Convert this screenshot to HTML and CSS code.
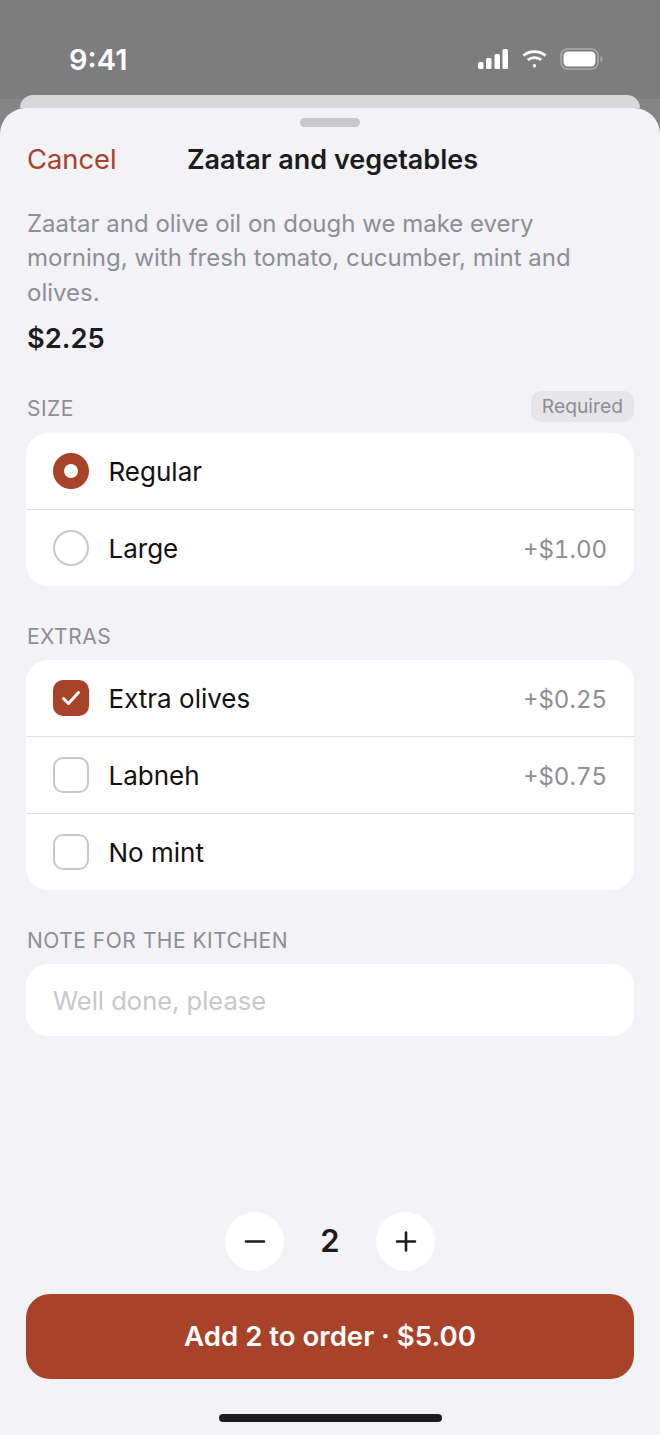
FILE: index.html
```html
<!doctype html>
<html lang="en">
	<head>
		<meta charset="utf-8">
		<title>Zaatar and vegetables</title>
		<meta name="viewport" content="width=device-width, initial-scale=1">
		<link rel="stylesheet" href="styles.css">
	</head>
	<body>
		<div class="status-bar">
			<span class="clock">9:41</span>
			<div class="status-icons">
				<svg width="30" height="20" viewBox="0 0 30 20" fill="#fff">
					<rect x="0" y="13" width="5.5" height="7" rx="1.5"/>
					<rect x="8" y="9" width="5.5" height="11" rx="1.5"/>
					<rect x="16.5" y="5" width="5.5" height="15" rx="1.5"/>
					<rect x="24.5" y="0" width="5.5" height="20" rx="1.5"/>
				</svg>
				<svg width="25" height="20" viewBox="0 0 26 20" fill="none" stroke="#fff" stroke-width="3">
					<path d="M1.5 6.5C8 1 18 1 24.5 6.5"/>
					<path d="M6 11C10 7.8 16 7.8 20 11"/>
					<circle cx="13" cy="17" r="1.8" fill="#fff" stroke="none"/>
				</svg>
				<svg width="43" height="22" viewBox="0 0 43 22" fill="none">
					<rect x="1" y="1" width="37" height="20" rx="6.5" stroke="#aaa" stroke-width="1.6"/>
					<rect x="3.5" y="3.5" width="32" height="15" rx="4.5" fill="#fff"/>
					<path d="M40.5 8C42 8.5 42.5 9.5 42.5 11S42 13.5 40.5 14Z" fill="#aaa"/>
				</svg>
			</div>
		</div>
		<div class="back-card"></div>
		<main class="sheet">
			<div class="grabber"></div>
			<header class="nav">
				<span class="cancel">Cancel</span>
				<h1>Zaatar and vegetables</h1>
			</header>
			<p class="desc">Zaatar and olive oil on dough we make every morning, with fresh tomato, cucumber, mint and olives.</p>
			<div class="price">$2.25</div>

			<div class="section-head">
				<span class="label">Size</span>
				<span class="pill">Required</span>
			</div>
			<div class="group">
				<div class="row">
					<span class="radio on"></span>
					<span class="name">Regular</span>
				</div>
				<div class="row">
					<span class="radio"></span>
					<span class="name">Large</span>
					<span class="extra">+$1.00</span>
				</div>
			</div>

			<div class="section-head extras-head">
				<span class="label">Extras</span>
			</div>
			<div class="group">
				<div class="row">
					<span class="check on">
						<svg width="20" height="16" viewBox="0 0 20 16" fill="none" stroke="#fff" stroke-width="3" stroke-linecap="round" stroke-linejoin="round"><path d="M2.5 8.5L7.5 13.5L17.5 2.5"/></svg>
					</span>
					<span class="name">Extra olives</span>
					<span class="extra">+$0.25</span>
				</div>
				<div class="row">
					<span class="check"></span>
					<span class="name">Labneh</span>
					<span class="extra">+$0.75</span>
				</div>
				<div class="row">
					<span class="check"></span>
					<span class="name">No mint</span>
				</div>
			</div>

			<div class="section-head note-head">
				<span class="label">Note for the kitchen</span>
			</div>
			<div class="note">Well done, please</div>

			<div class="stepper">
				<span class="step-btn">
					<svg width="22" height="22" viewBox="0 0 22 22" stroke="#1c1c1e" stroke-width="2.6" stroke-linecap="round"><path d="M2 10.5H20"/></svg>
				</span>
				<span class="qty">2</span>
				<span class="step-btn">
					<svg width="22" height="22" viewBox="0 0 22 22" stroke="#1c1c1e" stroke-width="2.6" stroke-linecap="round"><path d="M2 10.5H20M11 1.5V19.5"/></svg>
				</span>
			</div>
			<button class="add">Add 2 to order · $5.00</button>
			<div class="home-bar"></div>
		</main>
	</body>
</html>
```

FILE: styles.css
```css
html, body {
	margin: 0;
	height: 100%;
}

body {
	width: 660px;
	height: 1435px;
	overflow: hidden;
	display: flex;
	flex-direction: column;
	background: linear-gradient(#7d7d7d 99px, #858585 99px);
	font-family: Inter, "Liberation Sans", sans-serif;
	color: #1c1c1e;
}

.status-bar {
	height: 95px;
	flex: none;
	box-sizing: border-box;
	padding: 40px 57px 0 69px;
	display: flex;
	justify-content: space-between;
	align-items: flex-start;
}

.clock {
	color: #fff;
	font-size: 29px;
	line-height: 38px;
	font-weight: 600;
	margin-top: 1px;
}

.status-icons {
	display: flex;
	align-items: center;
	gap: 13.5px;
	height: 38px;
}

.back-card {
	flex: none;
	height: 13px;
	margin: 0 20px;
	background: #d8d8d8;
	border-radius: 24px 24px 0 0;
}

.sheet {
	flex: 1;
	display: flex;
	flex-direction: column;
	box-sizing: border-box;
	padding: 10px 26px 0;
	background: #f2f2f7;
	border-radius: 26px 26px 0 0;
}

.grabber {
	width: 60px;
	height: 9px;
	border-radius: 5px;
	background: #c7c7cc;
	align-self: center;
}

.nav {
	display: grid;
	grid-template-columns: 160px auto;
	align-items: center;
	height: 38px;
	margin-top: 13px;
	padding-left: 1px;
}

.cancel {
	color: #a8432a;
	font-size: 27.3px;
}

h1 {
	margin: 0;
	font-size: 27px;
	font-weight: 600;
}

.desc {
	margin: 28.5px 0 0 1px;
	font-size: 24px;
	line-height: 34.5px;
	color: #8e8e93;
}

.price {
	margin: 8.5px 0 0 1px;
	font-size: 27.3px;
	line-height: 40px;
	font-weight: 600;
}

.section-head {
	display: flex;
	justify-content: space-between;
	align-items: center;
	height: 32px;
	margin-top: 32px;
	margin-bottom: 10px;
	padding-left: 1px;
}

.extras-head {
	margin-top: 33px;
	margin-bottom: 9px;
}

.note-head {
	margin-top: 33px;
	margin-bottom: 9px;
}

.label {
	font-size: 21px;
	letter-spacing: 0.5px;
	color: #8e8e93;
	text-transform: uppercase;
	margin-top: 3px;
}

.pill {
	font-size: 19.3px;
	color: #8e8e93;
	background: #e5e5ea;
	border-radius: 10px;
	padding: 0 11px;
	line-height: 31px;
}

.group {
	background: #fff;
	border-radius: 22px;
	overflow: hidden;
}

.row {
	height: 76px;
	display: flex;
	align-items: center;
	padding: 0 27px 0 26.5px;
	gap: 20px;
	border-top: 1px solid #e0e0e5;
}

.row:first-child {
	border-top: 0;
}

.name {
	flex: 1;
	font-size: 26px;
	color: #111;
	margin-top: 2px;
}

.extra {
	font-size: 24px;
	color: #8e8e93;
	font-variant-numeric: tabular-nums;
	margin-top: 4px;
}

.radio, .check {
	flex: none;
	box-sizing: border-box;
	width: 36px;
	height: 36px;
	border: 2px solid #c7c7cc;
	display: flex;
	align-items: center;
	justify-content: center;
}

.radio {
	border-radius: 50%;
}

.check {
	border-radius: 10px;
}

.check.on {
	background: #a8432a;
	border-color: #a8432a;
}

.radio.on {
	border: 11.5px solid #a8432a;
}

.note {
	background: #fff;
	border-radius: 22px;
	height: 72px;
	line-height: 74px;
	padding: 0 27px;
	font-size: 25.5px;
	color: #c7c7cc;
}

.stepper {
	margin-top: auto;
	display: flex;
	justify-content: center;
	align-items: center;
	gap: 0;
}

.step-btn {
	width: 59px;
	height: 59px;
	border-radius: 50%;
	background: #fff;
	display: flex;
	align-items: center;
	justify-content: center;
}

.qty {
	width: 92px;
	text-align: center;
	font-size: 31px;
	font-weight: 600;
	margin-bottom: 2px;
}

.add {
	margin-top: 23px;
	height: 85px;
	border: 0;
	border-radius: 24px;
	padding: 0 0 2px;
	background: #a8432a;
	color: #fff;
	font-family: inherit;
	font-size: 27.6px;
	font-weight: 600;
}

.home-bar {
	width: 223px;
	height: 8px;
	border-radius: 4px;
	background: #1c1c1e;
	align-self: center;
	margin: 35px 0 13px;
}
```
